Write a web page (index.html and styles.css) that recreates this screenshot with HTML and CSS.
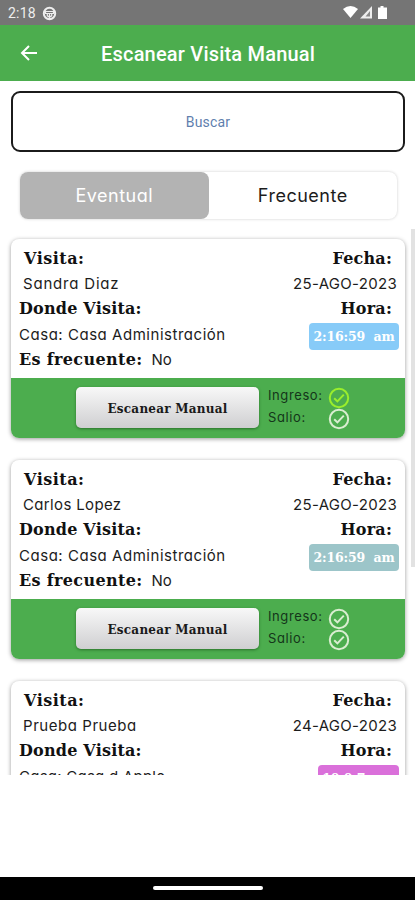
FILE: index.html
```html
<!DOCTYPE html>
<html lang="es">
<head>
<meta charset="utf-8">
<title>Escanear Visita Manual</title>
<link rel="stylesheet" href="styles.css">
</head>
<body>
<svg class="defs" width="0" height="0"><symbol id="check" viewBox="0 0 22 22"><circle cx="11" cy="11" r="9.2"/><path d="M6.2 11.2l3.2 3.2 6.4-6.8"/></symbol></svg>
<div class="status">
  <span>2:18</span>
  <svg class="status-app" width="15" height="15" viewBox="0 0 15 15"><circle cx="7.5" cy="7.5" r="5.7" fill="none" stroke="#eee" stroke-width="2"/><path d="M3.5 5.5h8v2h-8zM5.3 7.5v2.3q2.2 2 4.4 0V7.5M7.5 8v5" fill="none" stroke="#eee" stroke-width="1.2"/></svg>
  <svg class="status-right" width="46" height="16" viewBox="0 0 46 16"><path d="M0 4Q7.5-2 15 4L7.5 13z" fill="#fff"/><path d="M17 13.5L29 1v12.5z" fill="#eee"/><path d="M22.5 11.5L27 6v5.5z" fill="#8a8a8a"/><path d="M37.5 1h3v1.5H44V14h-9V2.5h2.500z" fill="#fff"/></svg>
</div>
<header class="bar">
  <svg class="back" width="18" height="18" viewBox="0 0 18 18"><path d="M17 9H2.500M9 2L2 9l7 7" fill="none" stroke="#fff" stroke-width="2"/></svg>
  <h1>Escanear Visita Manual</h1>
</header>
<div class="search">Buscar</div>
<nav class="tabs"><span class="tab active">Eventual</span><span class="tab">Frecuente</span></nav>
<main class="list">
  <div class="scroll"></div>
  <article class="card">
    <div class="info">
      <div class="row"><b class="visit">Visita:</b><b>Fecha:</b></div>
      <div class="row"><span class="name">Sandra Diaz</span><span class="date">25-AGO-2023</span></div>
      <div class="row"><b>Donde Visita:</b><b>Hora:</b></div>
      <div class="row"><span>Casa: Casa Administración</span><span class="time blue">2:16:59&nbsp; am</span></div>
      <div class="row"><b class="often">Es frecuente:</b><span class="no">No</span></div>
    </div>
    <footer><button>Escanear Manual</button>
      <div class="checks"><div><span>Ingreso:</span><svg class="check lime"><use href="#check"/></svg></div><div><span>Salio:</span><svg class="check"><use href="#check"/></svg></div></div>
    </footer>
  </article>
  <article class="card">
    <div class="info">
      <div class="row"><b class="visit">Visita:</b><b>Fecha:</b></div>
      <div class="row"><span class="name carlos">Carlos Lopez</span><span class="date">25-AGO-2023</span></div>
      <div class="row"><b>Donde Visita:</b><b>Hora:</b></div>
      <div class="row"><span>Casa: Casa Administración</span><span class="time teal">2:16:59&nbsp; am</span></div>
      <div class="row"><b class="often">Es frecuente:</b><span class="no">No</span></div>
    </div>
    <footer><button>Escanear Manual</button>
      <div class="checks"><div><span>Ingreso:</span><svg class="check"><use href="#check"/></svg></div><div><span>Salio:</span><svg class="check"><use href="#check"/></svg></div></div>
    </footer>
  </article>
  <article class="card">
    <div class="info">
      <div class="row"><b class="visit">Visita:</b><b>Fecha:</b></div>
      <div class="row"><span class="name prueba">Prueba Prueba</span><span class="date">24-AGO-2023</span></div>
      <div class="row"><b>Donde Visita:</b><b>Hora:</b></div>
      <div class="row"><span class="apple">Casa: Casa d Apple</span><span class="time pink">10:0:7&nbsp; am</span></div>
    </div>
  </article>
</main>
<div class="home"><i></i></div>
</body>
</html>
```
FILE: styles.css
```css
* { box-sizing: border-box; }
body { margin: 0; width: 415px; height: 900px; overflow: hidden; display: flex; flex-direction: column; background: #fff; color: #1c1c1c; font-family: Inter, sans-serif; font-feature-settings: "cv11"; }
.defs { position: absolute; }
.status { height: 25px; flex: none; background: #757575; color: #eee; font: 14px Roboto, sans-serif; letter-spacing: .2px; display: flex; align-items: center; padding: 1px 26px 0 8px; }
.status-app { margin-left: 6px; }
.status-right { margin-left: auto; }
.bar { height: 56px; flex: none; background: #4cad4e; display: flex; align-items: center; padding-left: 20px; }
h1 { margin: 2px 0 0 63px; font: 500 20px Roboto, sans-serif; letter-spacing: .2px; color: #fff; white-space: nowrap; }
.search { height: 61px; flex: none; margin: 10px 10px 0 11px; border: 2px solid #1b1b1b; border-radius: 9px; display: flex; align-items: center; justify-content: center; font: 14px Roboto, sans-serif; letter-spacing: .2px; color: #5f7fae; }
.tabs { height: 47px; flex: none; margin: 20px 18px 0 20px; display: flex; border-radius: 8px; box-shadow: 0 0 3px #ccc; }
.tab { flex: 1; display: flex; align-items: center; justify-content: center; font-size: 18px; letter-spacing: .5px; }
.tab.active { background: #b3b3b3; color: #fff; border-radius: 8px; }
.list { height: 546px; flex: none; margin-top: 10px; padding: 10px 11px 0; overflow: hidden; position: relative; }
.scroll { position: absolute; right: 0; top: 0; width: 4px; height: 338px; background: #e2e2e2; }
.card { width: 394px; height: 199px; margin-bottom: 22px; border-radius: 8px; background: #fff; overflow: hidden; box-shadow: 0 1px 4px #999; }
.info { height: 139px; padding: 7px 13px 0 8px; }
.row { height: 25.2px; display: flex; align-items: center; justify-content: space-between; white-space: nowrap; font-size: 15px; letter-spacing: .53px; }
b, .time, button { font-family: "DejaVu Serif", serif; font-weight: 700; }
b { font-size: 16px; letter-spacing: .2px; color: #111; }
.visit { margin-left: 5px; letter-spacing: .5px; }
.name { margin-left: 4px; letter-spacing: .8px; }
.carlos { letter-spacing: .35px; }
.prueba { letter-spacing: .55px; }
.apple { letter-spacing: .25px; }
.date { margin-right: -5px; letter-spacing: .3px; }
.time { height: 27px; width: 90px; margin: 5px -7px 0 0; border-radius: 4px; color: #fff; font-size: 12.5px; letter-spacing: -.15px; display: flex; align-items: center; justify-content: center; flex: none; }
.blue { background: #87cbf8; }
.teal { background: #9cc5c9; }
.pink { background: #da70da; width: 81px; }
.often { letter-spacing: .35px; }
.no { margin-right: auto; margin-left: 9px; letter-spacing: 0; }
footer { height: 60px; background: #4cad4e; display: flex; padding: 9px 0 0 65px; }
button { width: 183px; height: 41px; padding: 2px 0 0; border: 0; border-radius: 5px; background: linear-gradient(#f8f8f8, #cfcfd1); font-size: 12px; letter-spacing: .25px; color: #1a1a1a; box-shadow: 0 1px 3px #2b722c; }
.checks { margin-left: 9px; font-size: 13px; letter-spacing: .6px; color: #14351a; }
.checks div { display: flex; height: 21.5px; align-items: center; }
.checks span { width: 60px; margin-top: -5px; }
.check { width: 22px; height: 22px; flex: none; fill: none; stroke: #d9edd0; stroke-width: 2; }
.lime { stroke: #9aee2c; }
.home { height: 23px; flex: none; margin-top: auto; background: #000; display: flex; justify-content: center; padding-top: 9px; }
.home i { width: 110px; height: 4px; border-radius: 2px; background: #fff; }
```
